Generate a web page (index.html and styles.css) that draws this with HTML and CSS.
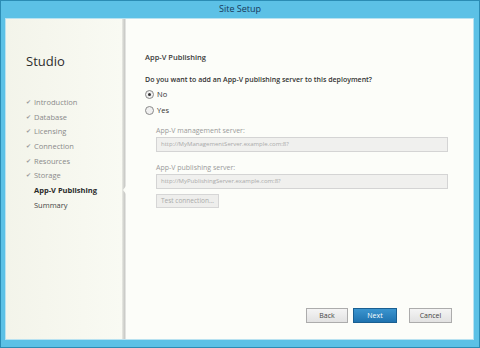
FILE: index.html
```html
<!DOCTYPE html>
<html lang="en">
<head>
    <meta charset="UTF-8">
    <title>Site Setup</title>
    <link rel="stylesheet" href="styles.css">
</head>
<body>
    <div class="window">
        <div class="titlebar">Site Setup</div>
        <div class="frame">
            <div class="sidebar">
                <div class="brand">Studio</div>
                <ul class="steps">
                    <li class="done">Introduction</li>
                    <li class="done">Database</li>
                    <li class="done">Licensing</li>
                    <li class="done">Connection</li>
                    <li class="done">Resources</li>
                    <li class="done">Storage</li>
                    <li class="current">App-V Publishing</li>
                    <li>Summary</li>
                </ul>
            </div>
            <div class="divider"><span class="notch"></span></div>
            <div class="main">
                <div class="page-title">App-V Publishing</div>
                <div class="question">Do you want to add an App-V publishing server to this deployment?</div>
                <label class="radio"><span class="dot checked"></span>No</label>
                <label class="radio"><span class="dot"></span>Yes</label>

                <div class="fields">
                    <div class="field-label">App-V management server:</div>
                    <div class="input">http://MyManagementServer.example.com:8?</div>
                    <div class="field-label">App-V publishing server:</div>
                    <div class="input last">http://MyPublishingServer.example.com:8?</div>
                    <div class="small-btn">Test connection...</div>
                </div>

                <div class="actions">
                    <button class="btn back">Back</button>
                    <button class="btn primary">Next</button>
                    <button class="btn cancel">Cancel</button>
                </div>
            </div>
        </div>
    </div>
</body>
</html>
```

FILE: styles.css
```css
body {
    margin: 0;
    font-family: "Open Sans", "Noto Sans", sans-serif;
    color: #333;
}
.window {
    width: 480px;
    height: 348px;
    box-sizing: border-box;
    background: #5cc1e6;
    border: 1px solid #2b8cb4;
    display: flex;
    flex-direction: column;
}
.titlebar {
    height: 17px;
    line-height: 16px;
    text-align: center;
    font-size: 9px;
    color: #17395a;
}
.frame {
    flex: 1;
    display: flex;
    margin: 0 5px 7px 4px;
    background: #fbfcf7;
    border: 1px solid #b8e2f1;
}
.sidebar {
    width: 116px;
    background: linear-gradient(90deg, #f3f4ea, #f9faf3);
    padding-left: 20px;
    box-sizing: border-box;
}
.brand {
    font-size: 13px;
    color: #2d2d2d;
    margin-top: 33px;
}
.steps {
    list-style: none;
    margin: 25px 0 0;
    padding: 0;
}
.steps li {
    font-size: 7.5px;
    height: 14.7px;
    line-height: 14.7px;
    color: #8a8a8a;
    padding-left: 8px;
    position: relative;
}
.steps li.done::before {
    content: "\2714";
    position: absolute;
    left: 0;
    font-size: 6px;
    color: #9a9a9a;
}
.steps li.current {
    font-weight: bold;
    color: #2a2a2a;
}
.steps li:last-child {
    color: #444;
}
.divider {
    width: 4px;
    background: linear-gradient(90deg, #e9eae4, #c9cac6 60%, #eeeeec);
    position: relative;
}
.notch {
    position: absolute;
    top: 167px;
    left: 1px;
    width: 0;
    height: 0;
    border-top: 4px solid transparent;
    border-bottom: 4px solid transparent;
    border-right: 3px solid #fbfcf7;
}
.main {
    flex: 1;
    display: flex;
    flex-direction: column;
    padding: 33px 21px 0 19px;
    background: #fcfdf9;
}
.page-title {
    font-size: 7.5px;
    font-weight: 600;
    color: #3a3a3a;
}
.question {
    font-size: 7px;
    font-weight: 600;
    color: #333;
    margin-top: 13px;
}
.radio {
    display: flex;
    align-items: center;
    font-size: 7.5px;
    color: #333;
    margin-top: 4px;
    height: 12px;
}
.dot {
    width: 7px;
    height: 7px;
    border: 1px solid #8a8a8a;
    border-radius: 50%;
    background: #f0f0f0;
    margin-right: 3px;
    position: relative;
}
.dot.checked::after {
    content: "";
    position: absolute;
    left: 2px;
    top: 2px;
    width: 3px;
    height: 3px;
    border-radius: 50%;
    background: #333;
}
.fields {
    display: flex;
    flex-direction: column;
    align-items: flex-start;
    padding-left: 11px;
    margin: 10px 4px 0 0;
}
.field-label {
    font-size: 7px;
    color: #9a9a9a;
    margin-bottom: 2px;
}
.input {
    align-self: stretch;
    height: 13px;
    line-height: 13px;
    border: 1px solid #d4d4d4;
    background: #f0f0ee;
    font-size: 6px;
    color: #aaa;
    padding-left: 4px;
    margin-bottom: 11px;
}
.input.last {
    margin-bottom: 5px;
}
.small-btn {
    height: 12px;
    line-height: 12px;
    border: 1px solid #d6d6d6;
    background: #eeeeec;
    color: #aaa;
    font-size: 6.5px;
    padding: 0 4px;
}
.actions {
    margin-top: auto;
    margin-bottom: 16px;
    display: flex;
    justify-content: flex-end;
    gap: 5px;
}
.btn {
    width: 43px;
    height: 15px;
    font-family: inherit;
    font-size: 7px;
    color: #444;
    border: 1px solid #acacac;
    background: linear-gradient(#f4f4f4, #e2e2e2);
    padding: 0;
}
.btn.back {
    width: 42px;
}
.btn.primary {
    width: 44px;
    background: linear-gradient(#3b95cf, #1f73b0);
    border-color: #1a5f91;
    color: #fff;
}
.btn.cancel {
    margin-left: 7px;
}
```
